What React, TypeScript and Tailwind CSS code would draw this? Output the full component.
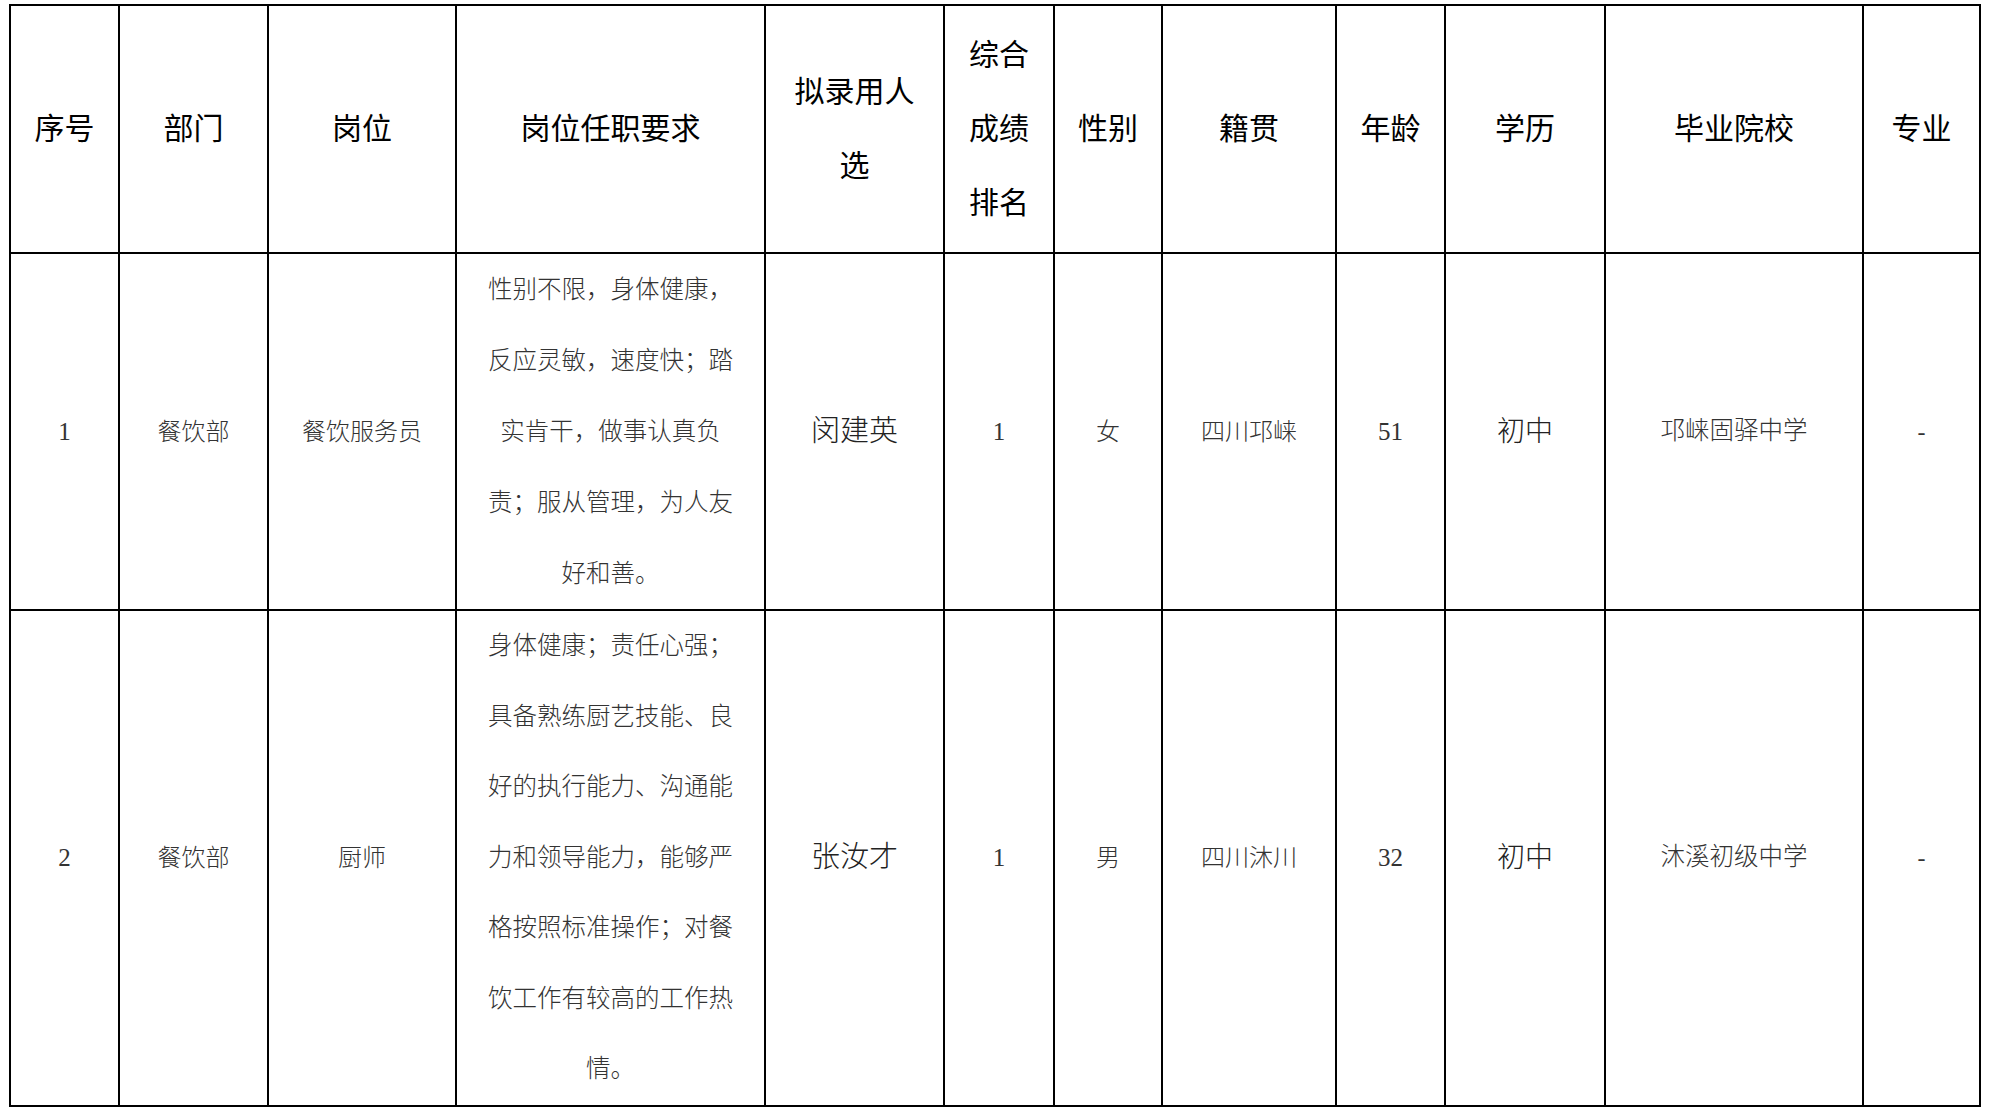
const headers: string[][] = [
  ["序号"],
  ["部门"],
  ["岗位"],
  ["岗位任职要求"],
  ["拟录用人", "选"],
  ["综合", "成绩", "排名"],
  ["性别"],
  ["籍贯"],
  ["年龄"],
  ["学历"],
  ["毕业院校"],
  ["专业"],
];

const widths = [109, 149, 188, 309, 179, 110, 108, 174, 109, 160, 258, 117];

const rows = [
  {
    height: "h-[355px]",
    leading: "leading-[71px]",
    no: "1",
    dept: "餐饮部",
    post: "餐饮服务员",
    req: [
      "性别不限，身体健康，",
      "反应灵敏，速度快；踏",
      "实肯干，做事认真负",
      "责；服从管理，为人友",
      "好和善。",
    ],
    name: "闵建英",
    rank: "1",
    sex: "女",
    origin: "四川邛崃",
    age: "51",
    edu: "初中",
    school: "邛崃固驿中学",
    major: "-",
  },
  {
    height: "h-[494px]",
    leading: "leading-[70.5px]",
    no: "2",
    dept: "餐饮部",
    post: "厨师",
    req: [
      "身体健康；责任心强；",
      "具备熟练厨艺技能、良",
      "好的执行能力、沟通能",
      "力和领导能力，能够严",
      "格按照标准操作；对餐",
      "饮工作有较高的工作热",
      "情。",
    ],
    name: "张汝才",
    rank: "1",
    sex: "男",
    origin: "四川沐川",
    age: "32",
    edu: "初中",
    school: "沐溪初级中学",
    major: "-",
  },
];

const cell = "border-2 border-black text-center align-middle p-0";

export default function App() {
  return (
    <div className="min-h-screen bg-white pt-[4px] pl-[9px] font-['Liberation_Serif','Noto_Sans_CJK_SC',serif]">
      <table className="table-fixed border-collapse w-[1970px]">
        <colgroup>
          {widths.map((w, i) => (
            <col key={i} style={{ width: w }} />
          ))}
        </colgroup>
        <thead>
          <tr className="h-[248px]">
            {headers.map((lines, i) => (
              <th key={i} className={`${cell} font-normal text-[30px] leading-[74px] text-black`}>
                {lines.map((l, j) => (
                  <div key={j}>{l}</div>
                ))}
              </th>
            ))}
          </tr>
        </thead>
        <tbody className="font-light">
          {rows.map((r) => (
            <tr key={r.no} className={r.height}>
              <td className={`${cell} text-[25px] text-[#333]`}>{r.no}</td>
              <td className={`${cell} text-[24px] text-[#333]`}>{r.dept}</td>
              <td className={`${cell} text-[24px] text-[#333]`}>{r.post}</td>
              <td className={`${cell} text-[24.5px] text-[#333] ${r.leading}`}>
                {r.req.map((l, j) => (
                  <div key={j} className="whitespace-nowrap">
                    {l}
                  </div>
                ))}
              </td>
              <td className={`${cell} text-[29px] text-[#222]`}>{r.name}</td>
              <td className={`${cell} text-[25px] text-[#333]`}>{r.rank}</td>
              <td className={`${cell} text-[24px] text-[#333]`}>{r.sex}</td>
              <td className={`${cell} text-[24px] text-[#333]`}>{r.origin}</td>
              <td className={`${cell} text-[25px] text-[#333]`}>{r.age}</td>
              <td className={`${cell} text-[28px] text-[#222]`}>{r.edu}</td>
              <td className={`${cell} text-[24.5px] text-[#333]`}>{r.school}</td>
              <td className={`${cell} text-[24px] text-[#333]`}>{r.major}</td>
            </tr>
          ))}
        </tbody>
      </table>
    </div>
  );
}
